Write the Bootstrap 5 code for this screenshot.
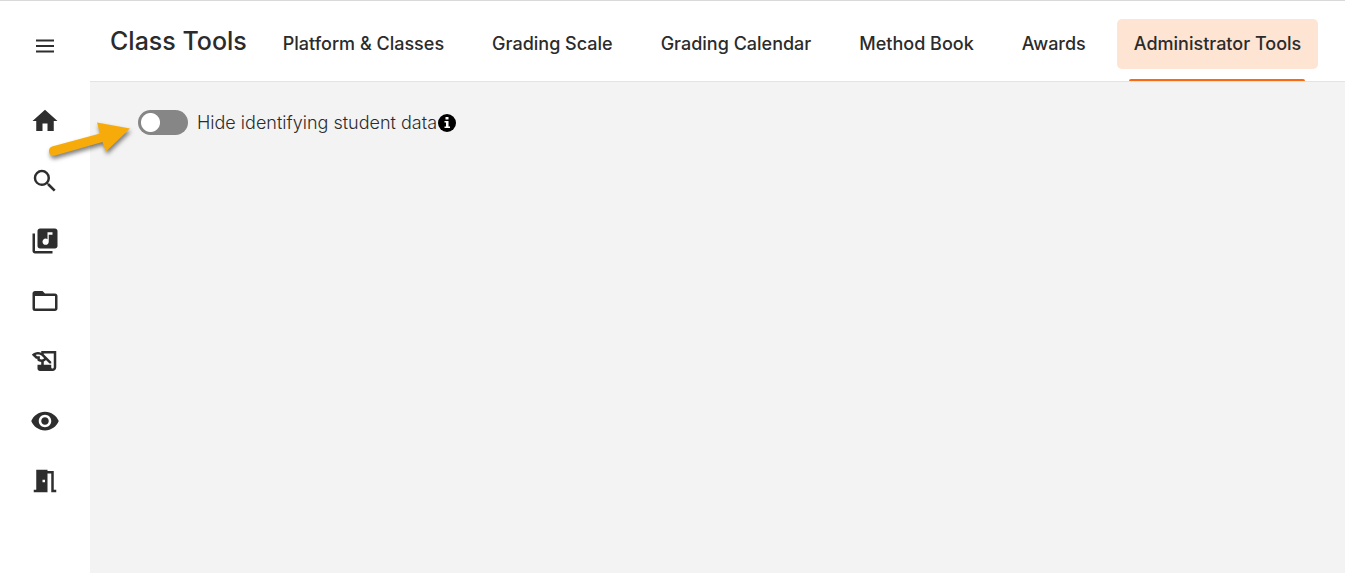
<!DOCTYPE html>
<html lang="en">
<head>
<meta charset="utf-8">
<meta name="viewport" content="width=device-width, initial-scale=1">
<title>Class Tools</title>
<link href="https://cdn.jsdelivr.net/npm/bootstrap@5.3.0/dist/css/bootstrap.min.css" rel="stylesheet">
<style>
  body { font-family: Inter, sans-serif; color: #2b2b2b; background: #fff; font-size: 18px; line-height: 24px; }
  .app { border-top: 1px solid #d9d9d9; }
  .side { width: 90px; padding-top: 30px; }
  .side a, .side button { color: #2e2e2e; height: 30px; margin-bottom: 30px; }
  .side button { height: 30px; margin-bottom: 45px; background: none; }
  .side svg { width: 30px; height: 30px; fill: currentColor; display: block; }
  .side button svg { width: 24px; height: 24px; }
  .topbar { height: 81px; border-bottom: 1px solid #e3e3e3; padding-left: 20px; padding-right: 27px; }
  .page-title { font-size: 25px; line-height: 30px; font-weight: 500; margin: 0 19px 0 0; }
  .tabs { gap: 14px; padding-top: 6px; }
  .tabs .nav-link { color: #2b2b2b; font-weight: 500; padding: 13px 17px; border-radius: 5px; white-space: nowrap; position: relative; }
  .tabs .nav-link.active { background: #fee4d3; }
  .tabs .nav-link.active::after { content: ""; position: absolute; left: 12px; right: 13px; bottom: -12px; height: 2px; background: #f96b13; border-radius: 2px 2px 0 0; }
  .main-area { background: #f3f3f3; padding: 28px 48px; }
  .form-switch .form-check-input.hide-switch { width: 50px; height: 25px; margin: 0; border: 0; background-color: #868686; background-size: 25px 25px;
    --bs-form-switch-bg: none; background-image: radial-gradient(circle, #fff 9px, transparent 10px); background-position: left center; }
  .form-switch .form-check-input.hide-switch:checked { background-color: #f96b13; background-position: right center; }
  .hide-label { font-weight: 300; margin-left: 9px; margin-right: 1px; }
  .info svg { width: 18px; height: 18px; display: block; }
  .pointer { position: absolute; left: 40px; top: 114px; width: 100px; height: 50px; pointer-events: none; filter: drop-shadow(1px 3px 2px rgba(0,0,0,.5)); }
</style>
</head>
<body>
<div class="app d-flex min-vh-100 position-relative">
  <nav class="side d-flex flex-column align-items-center flex-shrink-0" aria-label="Main">
    <button type="button" class="border-0 p-0 d-flex align-items-center" aria-label="Menu"><svg viewBox="0 0 24 24"><path d="M3 5.500h18v2H3zM3 11h18v2H3zM3 16.500h18v2H3z"/></svg></button>
    <a href="#" aria-label="Home"><svg viewBox="0 0 24 24"><path d="M10 20v-6h4v6h5v-8h3L12 3 2 12h3v8z"/></svg></a>
    <a href="#" aria-label="Search"><svg viewBox="0 0 24 24"><path d="M15.500 14h-.79l-.28-.27A6.470 6.470 0 0 0 16 9.500 6.500 6.500 0 1 0 9.500 16c1.610 0 3.090-.59 4.230-1.570l.27.28v.79l5 4.990L20.490 19zm-6 0C7.010 14 5 11.990 5 9.500S7.010 5 9.500 5 14 7.010 14 9.500 11.990 14 9.500 14z"/></svg></a>
    <a href="#" aria-label="Music library"><svg viewBox="0 0 24 24"><path d="M20 2H8c-1.100 0-2 .9-2 2v12c0 1.100.9 2 2 2h12c1.100 0 2-.9 2-2V4c0-1.100-.9-2-2-2zm-2 5h-3v5.500c0 1.380-1.120 2.500-2.500 2.500S10 13.880 10 12.500s1.120-2.500 2.500-2.500c.57 0 1.080.19 1.500.51V5h4zM4 6H2v14c0 1.100.9 2 2 2h14v-2H4z"/></svg></a>
    <a href="#" aria-label="Files"><svg viewBox="0 0 24 24"><path d="M20 18H4V8h16m0-2h-8l-2-2H4c-1.110 0-2 .89-2 2v12a2 2 0 0 0 2 2h16c1.110 0 2-.9 2-2V8c0-1.110-.9-2-2-2z"/></svg></a>
    <a href="#" aria-label="Assignments"><svg viewBox="0 0 24 24"><path d="M9 4v1.380c-.83-.33-1.720-.5-2.610-.5-1.790 0-3.580.68-4.950 2.050l3.330 3.330h1.110v1.110c.86.86 1.980 1.310 3.110 1.360V15H6v3c0 1.100.9 2 2 2h10c1.660 0 3-1.340 3-3V4zM7.890 10.410V8.260H5.610L4.570 7.220C5.140 7 5.760 6.880 6.390 6.880c1.340 0 2.590.52 3.540 1.460l1.410 1.410-.2.2c-.51.51-1.190.8-1.920.8-.47 0-.93-.12-1.330-.34zM19 17c0 .55-.45 1-1 1s-1-.45-1-1v-2h-6v-2.590c.57-.23 1.100-.57 1.560-1.030l.2-.2L15.590 14H17v-1.410l-6-5.970V6h8z"/></svg></a>
    <a href="#" aria-label="View"><svg viewBox="0 0 24 24"><path d="M12 4.500C7 4.500 2.730 7.610 1 12c1.730 4.390 6 7.500 11 7.500s9.270-3.110 11-7.500c-1.730-4.390-6-7.500-11-7.500zM12 17c-2.760 0-5-2.240-5-5s2.240-5 5-5 5 2.240 5 5-2.240 5-5 5zm0-8c-1.660 0-3 1.340-3 3s1.340 3 3 3 3-1.340 3-3-1.340-3-3-3z"/></svg></a>
    <a href="#" aria-label="Log out"><svg viewBox="0 0 24 24"><path d="M14 6v15H3v-2h2V3h9v1h5v15h2v2h-4V6zm-4 5v2h2v-2z"/></svg></a>
  </nav>

  <div class="d-flex flex-column flex-grow-1">
    <header class="topbar d-flex align-items-center">
      <h1 class="page-title text-nowrap">Class Tools</h1>
      <nav class="tabs nav flex-nowrap ms-auto" aria-label="Class tools">
        <a class="nav-link" href="#">Platform &amp; Classes</a>
        <a class="nav-link" href="#">Grading Scale</a>
        <a class="nav-link" href="#">Grading Calendar</a>
        <a class="nav-link" href="#">Method Book</a>
        <a class="nav-link" href="#">Awards</a>
        <a class="nav-link active" aria-current="page" href="#">Administrator Tools</a>
      </nav>
    </header>
    <main class="main-area flex-grow-1">
      <div class="form-switch d-flex align-items-center p-0">
        <input class="form-check-input hide-switch" type="checkbox" role="switch" id="hideData">
        <label class="hide-label" for="hideData">Hide identifying student data</label>
        <span class="info" role="img" aria-label="Information"><svg viewBox="0 0 18 18"><circle cx="9" cy="9" r="9"/><path fill="#fff" d="M7.500 3h3v2.500h-3zM6.500 7h4v5.500h1.500V14H6.500v-1.500H8v-4H6.500z"/></svg></span>
      </div>
    </main>
  </div>

  <svg class="pointer" viewBox="0 0 100 50" aria-hidden="true"><path fill="#f7ab0b" d="M12 31.500 60 18.500 57 7.500 90 13.500 66 36.500 62.500 27 15 40.500C9 42.500 6.500 33.500 12 31.500z"/></svg>
</div>
<script src="https://cdn.jsdelivr.net/npm/bootstrap@5.3.0/dist/js/bootstrap.bundle.min.js"></script>
</body>
</html>
